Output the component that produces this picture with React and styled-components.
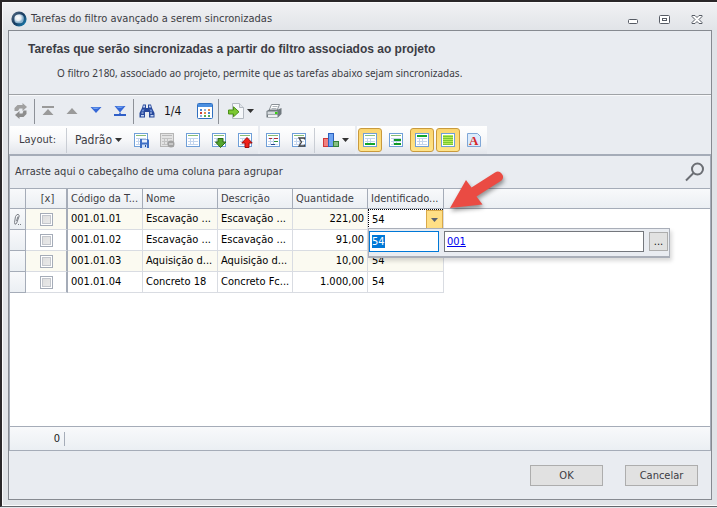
import React, { useEffect, useRef } from 'react';
import styled, { createGlobalStyle, css } from 'styled-components';

const GlobalStyle = createGlobalStyle`
  * {
    box-sizing: border-box;
  }

  body {
    margin: 0;
    background: #e3e6ea;
    color: #3c3c44;
    font: 11px/14px 'DejaVu Sans Condensed', 'DejaVu Sans', sans-serif;
  }

  button, input {
    font: inherit;
    color: inherit;
  }

  svg {
    display: block;
    flex: none;
  }
`;

const Window = styled.main`
  display: flex;
  flex-direction: column;
  min-height: calc(100vh - 1px);
  background: linear-gradient(#f1f2f4, #e0e3e7 30px);
  border: solid #2a2729;
  border-width: 2px 0 1px 2px;
  border-bottom-color: #62676c;
  box-shadow: inset 1px 1px #fbfbfc, inset 0 -1px #fbfbfc;
`;

const TitleBar = styled.header`
  display: flex;
  align-items: center;
  height: 28px;
  padding: 5px 4px 0 9px;
`;

const Title = styled.h1`
  flex: 1;
  margin: 0;
  padding-left: 4px;
  font: inherit;
`;

const WindowButton = styled.button`
  display: flex;
  align-items: center;
  justify-content: center;
  width: 32px;
  height: 20px;
  padding: 0;
  border: 0;
  background: none;
`;

const Panel = styled.div`
  flex: 1;
  display: flex;
  flex-direction: column;
  margin: 0 5px 6px 6px;
  border: 1px solid #868a91;
  background: #e9ecf1;
`;

const Intro = styled.section`
  height: 64px;
  padding: 11px 19px;
  border-bottom: 1px solid #9fa2a6;
`;

const IntroTitle = styled.h2`
  margin: 0;
  font: bold 12px/14px 'Liberation Sans', Arial, sans-serif;
`;

const IntroText = styled.p`
  margin: 10px 0 0;
  padding-left: 29px;
  font: 10px/14px 'Noto Sans', sans-serif;
`;

const Toolbar = styled.div`
  display: flex;
  align-items: center;
  height: 31px;
  border-top: 1px solid #f8f9fb;
`;

const LayoutBar = styled.div`
  display: flex;
  gap: 2px;
  height: 28px;
  padding-left: 1px;
`;

const Segment = styled.div`
  display: flex;
  align-items: center;
  gap: 2px;
  padding: 0 1px;
  background: linear-gradient(#ffffff, #f6f7f9 50%, #e3e6ec);
`;

const Separator = styled.span`
  width: 1px;
  height: 25px;
  margin: 0 1px;
  background: ${(props) => (props.$light ? '#c9cdd4' : '#8d9198')};
`;

const ToolButton = styled.button`
  display: flex;
  align-items: center;
  justify-content: center;
  gap: 3px;
  flex: none;
  min-width: 24px;
  height: 24px;
  padding: 0 ${(props) => props.$pad || '0'};
  border: 1px solid transparent;
  border-radius: 3px;
  background: none;
  font-size: 12px;

  ${(props) =>
    props.$checked &&
    css`
      border-color: #c99a3c;
      background: linear-gradient(#fbd56f, #ffe48a);
    `}
`;

const Counter = styled.output`
  width: 34px;
  padding-left: 5px;
  color: #111;
  font-size: 12px;
`;

const LayoutLabel = styled.span`
  padding: 0 7px 0 8px;
`;

const Grid = styled.section`
  flex: 1;
  display: flex;
  flex-direction: column;
  border: 1px solid #a5acb8;
  border-top-width: 2px;
  background: #fff;
`;

const GroupPanel = styled.div`
  display: flex;
  align-items: center;
  justify-content: space-between;
  height: 32px;
  padding: 0 5px;
  background: #e9ecf1;
`;

const SearchButton = styled.button`
  padding: 0;
  border: 0;
  background: none;
`;

const Table = styled.table`
  width: 100%;
  table-layout: fixed;
  border-spacing: 0;
`;

const HeadCell = styled.th`
  width: ${(props) => props.$width};
  height: 21px;
  padding: 0 0 0 3px;
  border: solid #a5acb8;
  border-width: 1px ${(props) => props.$edge || '1px'} 1px 0;
  background: linear-gradient(#f8f9fb, #ebeff3);
  font-weight: normal;
  text-align: ${(props) => props.$align || 'left'};
  white-space: nowrap;
  overflow: hidden;
`;

const Cell = styled.td`
  position: relative;
  height: 21px;
  padding: 0 3px 0 4px;
  border: solid #d9dce2;
  border-width: 0 1px 1px 0;
  background: ${(props) => (props.$alt ? '#fbfaf1' : '#fff')};
  color: #000;
  text-align: ${(props) => props.$align || 'left'};
  white-space: nowrap;
`;

const TextCell = styled(Cell)`
  padding: 0 0 0 3px;
  overflow: hidden;
`;

const CheckCell = styled(Cell)`
  padding: 0;
  border-right: 2px solid #a5acb8;
`;

const IndicatorCell = styled(Cell)`
  padding: 0 0 0 3px;
  border-color: #a5acb8;
  background: linear-gradient(#f8f9fb, #ebeff3);
`;

const CheckBox = styled.input`
  appearance: none;
  display: block;
  width: 13px;
  height: 13px;
  margin: 0 auto;
  border: 1px solid #a5acb8;
  background: linear-gradient(135deg, #dcdcdc, #ececec);
  box-shadow: inset 0 0 0 1px #fff, inset 0 0 0 2px #c3c6cc;
`;

const EditorCell = styled(Cell)`
  padding: 0;
  background: #fff;
`;

const Editor = styled.div`
  display: flex;
  height: 20px;
  border: dotted #000;
  border-width: 1px 0 0 1px;
`;

const EditorInput = styled.input`
  flex: 1;
  min-width: 0;
  padding: 0 3px;
  border: 0;
  outline: 0;
  background: none;
`;

const DropButton = styled.button`
  display: flex;
  align-items: center;
  justify-content: center;
  width: 17px;
  padding: 0;
  border: 1px solid #d9a94a;
  background: #ffdf85;
`;

const Popup = styled.div`
  position: absolute;
  z-index: 1;
  top: 19px;
  left: 0;
  display: flex;
  align-items: flex-start;
  gap: 5px;
  width: 302px;
  height: 30px;
  padding: 2px 1px 0 0;
  border: 1px solid #a9aeb8;
  border-bottom-width: 2px;
  background: #e9ecf1;
  box-shadow: 2px 3px 4px rgba(0, 0, 0, 0.15);
`;

const CodeInput = styled.input`
  width: 70px;
  height: 21px;
  padding: 0 2px;
  border: 1px solid #0078d7;
  outline: 0;
  background: #fff;

  &::selection {
    background: #0078d7;
    color: #fff;
  }
`;

const LinkBox = styled.div`
  flex: 1;
  height: 21px;
  padding: 3px 2px;
  border: 1px solid #74777d;
  background: #fff;
`;

const Link = styled.a`
  color: #0000ee;
`;

const MoreButton = styled.button`
  width: 19px;
  height: 19px;
  margin-top: 1px;
  padding: 0;
  border: 1px solid #adadad;
  background: #e1e1e1;
  color: #111;
`;

const Pointer = styled.svg`
  position: absolute;
  z-index: 2;
  top: -41px;
  left: 78px;
  overflow: visible;
  filter: drop-shadow(1px 3px 2px rgba(0, 0, 0, 0.4));
`;

const Summary = styled.div`
  display: flex;
  align-items: center;
  height: 24px;
  margin-top: auto;
  border-top: 1px solid #a5acb8;
  background: linear-gradient(#f8f9fb, #ebeff3);
`;

const SummaryValue = styled.span`
  width: 55px;
  padding-right: 4px;
  border-right: 1px solid #a5acb8;
  color: #222;
  text-align: right;
`;

const Actions = styled.footer`
  display: flex;
  justify-content: flex-end;
  gap: 22px;
  padding: 14px 13px 13px;
`;

const ActionButton = styled.button`
  width: 73px;
  height: 21px;
  padding: 0;
  border: 1px solid #adadad;
  background: #e1e1e1;
`;

const Icon = ({ children, size = 16 }) => (
  <svg width={size} height={size} viewBox={`0 0 ${size} ${size}`} aria-hidden="true">
    {children}
  </svg>
);

const Caret = ({ color = '#333' }) => (
  <svg width="7" height="4" viewBox="0 0 7 4" aria-hidden="true">
    <path d="M0 0h7L3.5 4z" fill={color} />
  </svg>
);

const LogoIcon = () => (
  <Icon>
    <defs>
      <linearGradient id="ring" x1="0" y1="0" x2="1" y2="1">
        <stop offset="0" stopColor="#5d7286" />
        <stop offset=".5" stopColor="#15395f" />
        <stop offset="1" stopColor="#1d8fc4" />
      </linearGradient>
      <radialGradient id="glow" cx=".4" cy=".4">
        <stop offset="0" stopColor="#fff" />
        <stop offset=".6" stopColor="#e6edf3" />
        <stop offset="1" stopColor="#8db4cf" />
      </radialGradient>
    </defs>
    <circle cx="8" cy="8" r="7.6" fill="url(#ring)" />
    <path d="M3.500 6Q5 2.800 9 3.200T12.800 7.500 10.500 12 5.500 12 3.500 6z" fill="url(#glow)" />
  </Icon>
);

const RefreshIcon = () => (
  <Icon>
    <path d="M1.500 8V5l3-3h5V0l4.500 4-4.500 4V5.500H6.500L5 8z" fill="#a0a0a0" />
    <path d="M13.500 7.500v3.500l-3 3h-4V16L2 12l4.500-4v2.500h3L10.500 7.500z" fill="#8d8d8d" />
  </Icon>
);

const FirstIcon = () => (
  <Icon>
    <path d="M2 3h12v2H2zM8 6l5.500 6h-11z" fill="#9a9a9a" />
  </Icon>
);

const UpIcon = () => (
  <Icon>
    <path d="M8 5l5.500 6h-11z" fill="#9a9a9a" />
  </Icon>
);

const DownIcon = () => (
  <Icon>
    <path d="M2.500 4h11L8 10z" fill="#3567d6" />
    <path d="M4 4.500h8L9 6H6z" fill="#6fa0f0" />
  </Icon>
);

const LastIcon = () => (
  <Icon>
    <path d="M2.500 3h11L8 9.500z" fill="#3567d6" />
    <path d="M4 3.500h8L9 5H6z" fill="#6fa0f0" />
    <path d="M2 11h5l1-2 1 2h5v2H2z" fill="#2f5fc8" />
  </Icon>
);

const BinocularsIcon = () => (
  <Icon>
    <path d="M3 5l1-3.500h3V5h2V1.500h3L13 5l2.500 5v4.500H10V9H6v5.500H.5V10z" fill="#27489c" />
    <path d="M4.500 2.500h1.500v2H4zM10 2.500h1.500l.5 2h-2zM2.500 9.500h2v1h-2zM11 9.500h2v1h-2zM2 12h3v1.500H2zM11.500 12h3v1.500h-3z" fill="#c9d9f6" />
    <path d="M3.500 6.500h2l-1 2h-2zM10.500 6.500h2l1 2h-2z" fill="#6f93da" />
  </Icon>
);

const CalendarIcon = () => (
  <Icon>
    <rect x=".5" y=".5" width="15" height="15" rx="1" fill="#fff" stroke="#2f6fc0" />
    <path d="M1 1h14v3H1z" fill="#4b8fe0" />
    <path d="M3 6h2v2H3zM11 9h2v2h-2z" fill="#4a86d0" />
    <path d="M7 6h2v2H7zM3 12h2v2H3z" fill="#8eb2dc" />
    <path d="M11 6h2v2h-2zM7 9h2v2H7z" fill="#e08a4a" />
    <path d="M3 9h2v2H3z" fill="#c9403a" />
    <path d="M7 12h2v2H7zM11 12h2v2h-2z" fill="#55ad55" />
  </Icon>
);

const ExportIcon = () => (
  <Icon>
    <path d="M4.500.5h7l4 4v11h-11z" fill="#f6f8fb" stroke="#b3b9c1" />
    <path d="M11.500.5v4h4" fill="#dfe4ea" stroke="#b3b9c1" />
    <path d="M.5 7h5V3.800l5.500 5-5.500 5V11h-5z" fill="#7cc832" stroke="#4b9018" />
  </Icon>
);

const PrinterIcon = () => (
  <Icon>
    <path d="M5.500 1.500h8L11 7.500H3z" fill="#fff" stroke="#8b9197" />
    <path d="M6.500 3.500h5M5.500 5.500h5" stroke="#adb4ba" />
    <path d="M.5 8l3-1.500h8.500l3.500-1.500v6L12 14.500H.5z" fill="#71797f" />
    <path d="M1.500 8.500h10v3h-10z" fill="#d5dade" />
    <path d="M2 12h9.500v2H2z" fill="#eef0f1" />
    <path d="M9 9h2.500v2H9z" fill="#35d010" />
  </Icon>
);

const ListBase = ({ border = '#6f9fd8', head = '#86bd78', line = '#c3d5ee', children }) => (
  <Icon>
    <rect x="1.500" y="1.500" width="13" height="13" fill="#fff" stroke={border} />
    <path d="M3 3.500h10" stroke={head} />
    <path d="M3 6.500h10M3 9.500h10M3 12.500h10M5.500 6v7M8.500 6v7" stroke={line} />
    {children}
  </Icon>
);

const SaveLayoutIcon = () => (
  <ListBase>
    <path d="M7 7h8l1 1v8H7z" fill="#3f6fc4" />
    <path d="M9 7.500h5v3H9z" fill="#e8f0fc" />
    <path d="M9 12.500h5V16H9z" fill="#cfe0f8" />
    <path d="M12 13h1v2h-1z" fill="#2c4f95" />
  </ListBase>
);

const RemoveLayoutIcon = () => (
  <ListBase border="#b6b6b6" head="#a8a8a8" line="#bcbcbc">
    <path d="M2 2h12v12H2z" fill="#c8c8c8" opacity=".5" />
    <circle cx="12" cy="12" r="3.500" fill="#a2a2a2" />
    <path d="M10 12h4" stroke="#eee" />
  </ListBase>
);

const ImportLayoutIcon = () => (
  <ListBase>
    <path d="M7 6.500h5v3.500h3L9.500 15.500 4.500 10H7z" fill="#55a52e" stroke="#2c6a14" />
  </ListBase>
);

const ExportLayoutIcon = () => (
  <ListBase>
    <path d="M8 15.500h4V11h3.200L10 5.500 4.800 11H8z" fill="#f0201a" stroke="#9c0d0d" />
  </ListBase>
);

const CustomizeIcon = () => (
  <ListBase>
    <path d="M4 6h3v1H4zM9 6h4v1H9z" fill="#b02a35" />
    <path d="M9 9h4v1H9z" fill="#2c8f3a" />
    <path d="M6 12h4v1H6z" fill="#26468f" />
  </ListBase>
);

const SumIcon = () => (
  <ListBase>
    <path d="M13.500 7.500V6H8l2.500 4L8 14h5.500v-1.500" fill="none" stroke="#444" strokeWidth="1.300" />
  </ListBase>
);

const ChartIcon = () => (
  <Icon>
    <rect x=".5" y="6.500" width="5" height="8" fill="#f08080" stroke="#cf3636" />
    <rect x="5.500" y="1.500" width="5" height="13" fill="#6fa5f2" stroke="#2b5fbd" />
    <rect x="10.500" y="9.500" width="5" height="5" fill="#86bf80" stroke="#35803a" />
  </Icon>
);

const FooterRowIcon = () => (
  <ListBase>
    <path d="M3 11h10v2H3z" fill="#12a52a" />
  </ListBase>
);

const GroupRowIcon = () => (
  <ListBase>
    <path d="M6 7h7v2H6zM6 11h7v2H6z" fill="#109a28" />
  </ListBase>
);

const HeaderRowIcon = () => (
  <ListBase>
    <path d="M3 3h10v2H3z" fill="#12a52a" />
  </ListBase>
);

const StripesIcon = () => (
  <Icon>
    <rect x="1.500" y="1.500" width="13" height="13" fill="#fff" stroke="#6f9fd8" />
    <path d="M3 3h10v10H3z" fill="#b6ea55" />
    <path d="M3 4.500h10M3 6.500h10M3 8.500h10M3 10.500h10M3 12.500h10" stroke="#79c832" />
  </Icon>
);

const FontIcon = () => (
  <Icon>
    <path d="M1.500 1.500h10l3 3v10h-13z" fill="#dcebfb" stroke="#7fa6d6" />
    <text x="3" y="13" fill="#d5262b" fontSize="13" fontWeight="bold" fontFamily="Liberation Serif, serif">A</text>
  </Icon>
);

const SearchIcon = () => (
  <Icon size={20}>
    <circle cx="12.500" cy="7" r="5.500" fill="none" stroke="#6b6e74" strokeWidth="2" />
    <path d="M8.500 11L1 18.500" stroke="#6b6e74" strokeWidth="2" />
  </Icon>
);

const ClipIcon = () => (
  <svg width="10" height="14" viewBox="0 0 10 14" aria-hidden="true">
    <path d="M1.500 10.500l1-6q1.500-3 3-2t0 3.500l-2 5.500q-2 2-2-1zM3.500 9l1.500-4.500" fill="none" stroke="#7b7f86" />
    <path d="M5 12h1v1H5zM7 12h1v1H7z" fill="#7b7f86" />
  </svg>
);

const rows = [
  { code: '001.01.01', name: 'Escavação ...', description: 'Escavação ...', amount: '221,00', id: '54' },
  { code: '001.01.02', name: 'Escavação ...', description: 'Escavação ...', amount: '91,00', id: '54' },
  { code: '001.01.03', name: 'Aquisição d...', description: 'Aquisição d...', amount: '10,00', id: '54' },
  { code: '001.01.04', name: 'Concreto 18', description: 'Concreto Fc...', amount: '1.000,00', id: '54' },
];

const IdEditor = ({ value }) => {
  const codeRef = useRef(null);

  useEffect(() => {
    codeRef.current.focus();
    codeRef.current.select();
  }, []);

  return (
    <EditorCell>
      <Editor>
        <EditorInput aria-label="Identificador" defaultValue={value} />
        <DropButton aria-label="Abrir">
          <Caret color="#5a6270" />
        </DropButton>
      </Editor>
      <Popup>
        <CodeInput ref={codeRef} aria-label="Código" defaultValue={value} />
        <LinkBox>
          <Link href="#001">001</Link>
        </LinkBox>
        <MoreButton>...</MoreButton>
      </Popup>
      <Pointer width="60" height="44" viewBox="0 0 60 44" aria-hidden="true">
        <path d="M4 40L20 12l5.500 7.500L49 4.500a5.200 5.200 0 0 1 6.500 8L30.500 28.500l6 8z" fill="#ea4b43" />
      </Pointer>
    </EditorCell>
  );
};

const App = () => {
  return (
    <>
      <GlobalStyle />
      <Window>
        <TitleBar>
          <LogoIcon />
          <Title>Tarefas do filtro avançado a serem sincronizadas</Title>
          <WindowButton aria-label="Minimizar">
            <Icon size={12}>
              <rect x="1.500" y="6.500" width="9" height="4" rx="1" fill="#fff" stroke="#565b64" />
            </Icon>
          </WindowButton>
          <WindowButton aria-label="Maximizar">
            <Icon size={12}>
              <rect x=".5" y="2.500" width="10" height="8" rx="1" fill="#fff" stroke="#565b64" />
              <rect x="3.500" y="5.500" width="4" height="2" fill="none" stroke="#565b64" />
            </Icon>
          </WindowButton>
          <WindowButton aria-label="Fechar">
            <Icon size={12}>
              <path d="M1 2.500h3l2 2 2-2h3v1L8 6.500l3 3v1H8l-2-2-2 2H1v-1l3-3-3-3z" fill="#fff" stroke="#565b64" />
            </Icon>
          </WindowButton>
        </TitleBar>

        <Panel>
          <Intro>
            <IntroTitle>Tarefas que serão sincronizadas a partir do filtro associados ao projeto</IntroTitle>
            <IntroText>
              O filtro 2180, associado ao projeto, permite que as tarefas abaixo sejam sincronizadas.
            </IntroText>
          </Intro>

          <Toolbar>
            <ToolButton aria-label="Atualizar"><RefreshIcon /></ToolButton>
            <Separator />
            <ToolButton aria-label="Primeiro"><FirstIcon /></ToolButton>
            <ToolButton aria-label="Anterior"><UpIcon /></ToolButton>
            <ToolButton aria-label="Próximo"><DownIcon /></ToolButton>
            <ToolButton aria-label="Último"><LastIcon /></ToolButton>
            <Separator />
            <ToolButton aria-label="Localizar"><BinocularsIcon /></ToolButton>
            <Counter>1/4</Counter>
            <ToolButton aria-label="Calendário"><CalendarIcon /></ToolButton>
            <Separator />
            <ToolButton $pad="7px" aria-label="Exportar">
              <ExportIcon />
              <Caret />
            </ToolButton>
            <ToolButton aria-label="Imprimir"><PrinterIcon /></ToolButton>
          </Toolbar>

          <LayoutBar>
            <Segment>
              <LayoutLabel>Layout:</LayoutLabel>
              <Separator $light />
              <ToolButton $pad="4px">
                Padrão
                <Caret />
              </ToolButton>
              <ToolButton aria-label="Salvar layout"><SaveLayoutIcon /></ToolButton>
              <ToolButton aria-label="Remover layout"><RemoveLayoutIcon /></ToolButton>
              <ToolButton aria-label="Layout original"><ListBase /></ToolButton>
              <ToolButton aria-label="Importar layout"><ImportLayoutIcon /></ToolButton>
              <ToolButton aria-label="Exportar layout"><ExportLayoutIcon /></ToolButton>
            </Segment>
            <Segment>
              <ToolButton aria-label="Personalizar"><CustomizeIcon /></ToolButton>
              <ToolButton aria-label="Totais"><SumIcon /></ToolButton>
              <Separator $light />
              <ToolButton $pad="4px" aria-label="Gráfico">
                <ChartIcon />
                <Caret />
              </ToolButton>
            </Segment>
            <Segment>
              <ToolButton $checked aria-label="Rodapé"><FooterRowIcon /></ToolButton>
              <ToolButton aria-label="Rodapé de grupo"><GroupRowIcon /></ToolButton>
              <ToolButton $checked aria-label="Agrupamento"><HeaderRowIcon /></ToolButton>
              <ToolButton $checked aria-label="Linhas alternadas"><StripesIcon /></ToolButton>
              <ToolButton aria-label="Fonte"><FontIcon /></ToolButton>
            </Segment>
          </LayoutBar>

          <Grid>
            <GroupPanel>
              Arraste aqui o cabeçalho de uma coluna para agrupar
              <SearchButton aria-label="Pesquisar">
                <SearchIcon />
              </SearchButton>
            </GroupPanel>
            <Table>
              <thead>
                <tr>
                  <HeadCell $width="16px" />
                  <HeadCell $width="42px" $edge="2px" $align="center">[x]</HeadCell>
                  <HeadCell $width="75px">Código da T...</HeadCell>
                  <HeadCell $width="75px">Nome</HeadCell>
                  <HeadCell $width="75px">Descrição</HeadCell>
                  <HeadCell $width="75px">Quantidade</HeadCell>
                  <HeadCell $width="76px">Identificado...</HeadCell>
                  <HeadCell $width="auto" $edge="0" />
                </tr>
              </thead>
              <tbody>
                {rows.map((row, index) => {
                  const alt = index % 2 === 0;
                  return (
                    <tr key={row.code}>
                      <IndicatorCell>{index === 0 && <ClipIcon />}</IndicatorCell>
                      <CheckCell $alt={alt}>
                        <CheckBox type="checkbox" aria-label={row.code} />
                      </CheckCell>
                      <TextCell $alt={alt}>{row.code}</TextCell>
                      <TextCell $alt={alt}>{row.name}</TextCell>
                      <TextCell $alt={alt}>{row.description}</TextCell>
                      <Cell $alt={alt} $align="right">{row.amount}</Cell>
                      {index === 0 ? <IdEditor value={row.id} /> : <Cell $alt={alt}>{row.id}</Cell>}
                    </tr>
                  );
                })}
              </tbody>
            </Table>
            <Summary>
              <SummaryValue>0</SummaryValue>
            </Summary>
          </Grid>

          <Actions>
            <ActionButton>OK</ActionButton>
            <ActionButton>Cancelar</ActionButton>
          </Actions>
        </Panel>
      </Window>
    </>
  );
};

export default App;
